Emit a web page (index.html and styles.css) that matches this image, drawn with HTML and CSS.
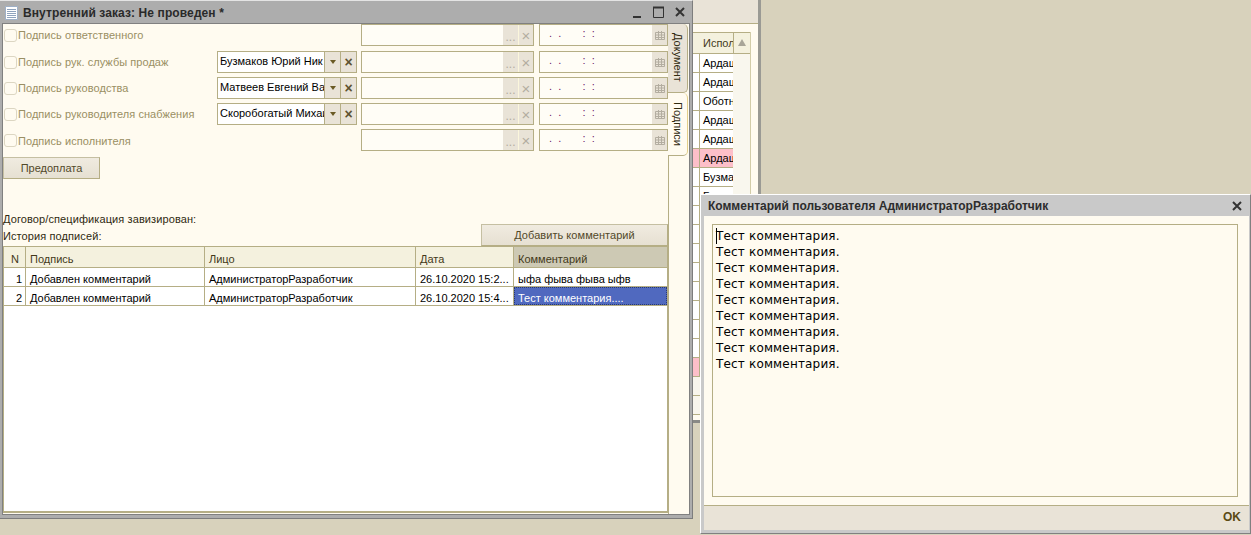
FILE: index.html
```html
<!DOCTYPE html>
<html lang="ru">
<head>
  <meta charset="UTF-8" />
  <title>Внутренний заказ</title>
  <link rel="stylesheet" href="styles.css">
</head>
<body>
  <div class="back-window">
    <div class="back-top"></div>
    <div class="back-content">
      <div class="back-table">
        <div class="back-head"><span class="back-col">Испол</span><span class="back-sort"></span></div>
        <div class="back-row"><span>Ардаш</span></div>
        <div class="back-row"><span>Ардаш</span></div>
        <div class="back-row"><span>Оботн</span></div>
        <div class="back-row"><span>Ардаш</span></div>
        <div class="back-row"><span>Ардаш</span></div>
        <div class="back-row pink"><span>Ардаш</span></div>
        <div class="back-row"><span>Бузма</span></div>
        <div class="back-row"><span>Бузма</span></div>
        <div class="back-row"></div>
        <div class="back-row"></div>
        <div class="back-row"></div>
        <div class="back-row"></div>
        <div class="back-row"></div>
        <div class="back-row"></div>
        <div class="back-row"></div>
        <div class="back-row"></div>
        <div class="back-row pink"></div>
        <div class="back-row pale"></div>
        <div class="back-row pale"></div>
      </div>
    </div>
  </div>

  <div class="window order">
    <div class="title">
      <svg class="doc-icon" width="13" height="14" viewBox="0 0 13 14"><path d="M.5.500h12v13H.5z" fill="#fff" stroke="#9fb0c6"/><path d="M2 3.500h9M2 5.500h9M2 7.500h9M2 9.500h9M2 11.500h9" stroke="#8fa3bd"/></svg>
      <span class="title-text">Внутренний заказ: Не проведен *</span>
      <span class="win-buttons">
        <svg width="10" height="14" viewBox="0 0 10 14"><path d="M0 12h8" stroke="#333" stroke-width="2"/></svg>
        <svg width="13" height="14" viewBox="0 0 13 14"><path d="M1.500 2.500h10v10h-10z" fill="none" stroke="#333"/><path d="M1 2.500h11" stroke="#333" stroke-width="2"/></svg>
        <svg width="12" height="14" viewBox="0 0 12 14"><path d="M2 3l8 8M10 3l-8 8" stroke="#333" stroke-width="2"/></svg>
      </span>
    </div>
    <div class="panel">
      <div class="form">
        <div class="signs">
          <div class="sign-row first">
            <span class="check"></span><span class="sign-label">Подпись ответственного</span>
            <span class="picker-slot"></span>
            <span class="field who"><span class="field-btn dots">...</span><span class="field-btn cross">×</span></span>
            <span class="field when"><span class="mask">.&nbsp;&nbsp;.&nbsp;&nbsp;&nbsp;&nbsp;&nbsp;&nbsp;&nbsp;:&nbsp;&nbsp;:</span><span class="field-btn cal"><svg width="10" height="10" viewBox="0 0 10 10"><path d="M.5 2.500h9v7h-9zM3.500 1v8.500M6.500 1v8.500M.5 5h9M.5 7.500h9" fill="none" stroke="#b3ada0"/></svg></span></span>
          </div>
          <div class="sign-row">
            <span class="check"></span><span class="sign-label">Подпись рук. службы продаж</span>
            <span class="picker"><span class="picker-text">Бузмаков Юрий Ник</span><span class="pick-btn"><i class="arrow"></i></span><span class="pick-btn x">×</span></span>
            <span class="field who"><span class="field-btn dots">...</span><span class="field-btn cross">×</span></span>
            <span class="field when"><span class="mask">.&nbsp;&nbsp;.&nbsp;&nbsp;&nbsp;&nbsp;&nbsp;&nbsp;&nbsp;:&nbsp;&nbsp;:</span><span class="field-btn cal"><svg width="10" height="10" viewBox="0 0 10 10"><path d="M.5 2.500h9v7h-9zM3.500 1v8.500M6.500 1v8.500M.5 5h9M.5 7.500h9" fill="none" stroke="#b3ada0"/></svg></span></span>
          </div>
          <div class="sign-row">
            <span class="check"></span><span class="sign-label">Подпись руководства</span>
            <span class="picker"><span class="picker-text">Матвеев Евгений Ва</span><span class="pick-btn"><i class="arrow"></i></span><span class="pick-btn x">×</span></span>
            <span class="field who"><span class="field-btn dots">...</span><span class="field-btn cross">×</span></span>
            <span class="field when"><span class="mask">.&nbsp;&nbsp;.&nbsp;&nbsp;&nbsp;&nbsp;&nbsp;&nbsp;&nbsp;:&nbsp;&nbsp;:</span><span class="field-btn cal"><svg width="10" height="10" viewBox="0 0 10 10"><path d="M.5 2.500h9v7h-9zM3.500 1v8.500M6.500 1v8.500M.5 5h9M.5 7.500h9" fill="none" stroke="#b3ada0"/></svg></span></span>
          </div>
          <div class="sign-row">
            <span class="check"></span><span class="sign-label">Подпись руководителя снабжения</span>
            <span class="picker"><span class="picker-text">Скоробогатый Михаи</span><span class="pick-btn"><i class="arrow"></i></span><span class="pick-btn x">×</span></span>
            <span class="field who"><span class="field-btn dots">...</span><span class="field-btn cross">×</span></span>
            <span class="field when"><span class="mask">.&nbsp;&nbsp;.&nbsp;&nbsp;&nbsp;&nbsp;&nbsp;&nbsp;&nbsp;:&nbsp;&nbsp;:</span><span class="field-btn cal"><svg width="10" height="10" viewBox="0 0 10 10"><path d="M.5 2.500h9v7h-9zM3.500 1v8.500M6.500 1v8.500M.5 5h9M.5 7.500h9" fill="none" stroke="#b3ada0"/></svg></span></span>
          </div>
          <div class="sign-row last">
            <span class="check"></span><span class="sign-label">Подпись исполнителя</span>
            <span class="picker-slot"></span>
            <span class="field who"><span class="field-btn dots">...</span><span class="field-btn cross">×</span></span>
            <span class="field when"><span class="mask">.&nbsp;&nbsp;.&nbsp;&nbsp;&nbsp;&nbsp;&nbsp;&nbsp;&nbsp;:&nbsp;&nbsp;:</span><span class="field-btn cal"><svg width="10" height="10" viewBox="0 0 10 10"><path d="M.5 2.500h9v7h-9zM3.500 1v8.500M6.500 1v8.500M.5 5h9M.5 7.500h9" fill="none" stroke="#b3ada0"/></svg></span></span>
          </div>
        </div>
        <div class="btn prepay">Предоплата</div>
        <div class="note contract">Договор/спецификация завизирован:</div>
        <div class="history-bar">
          <span class="note">История подписей:</span>
          <span class="btn add">Добавить комментарий</span>
        </div>
        <div class="grid">
          <div class="grid-row head">
            <span class="c-n center">N</span><span class="c-sign">Подпись</span><span class="c-face">Лицо</span><span class="c-date">Дата</span><span class="c-com current">Комментарий</span>
          </div>
          <div class="grid-row">
            <span class="c-n num">1</span><span class="c-sign">Добавлен комментарий</span><span class="c-face">АдминистраторРазработчик</span><span class="c-date">26.10.2020 15:2...</span><span class="c-com">ыфа фыва фыва ыфв</span>
          </div>
          <div class="grid-row">
            <span class="c-n num">2</span><span class="c-sign">Добавлен комментарий</span><span class="c-face">АдминистраторРазработчик</span><span class="c-date">26.10.2020 15:4...</span><span class="c-com selected">Тест комментария....</span>
          </div>
        </div>
      </div>
      <div class="tabs">
        <div class="tab inactive"><span>Документ</span></div>
        <div class="tab active"><span>Подписи</span></div>
        <div class="tab-rest"></div>
      </div>
    </div>
  </div>

  <div class="window comment">
    <div class="comment-title">
      <span>Комментарий пользователя АдминистраторРазработчик</span>
      <svg width="12" height="12" viewBox="0 0 12 12"><path d="M2 2l8 8M10 2l-8 8" stroke="#333" stroke-width="2"/></svg>
    </div>
    <div class="comment-body">
      <div class="memo">
        <div><i class="caret"></i>Тест комментария.</div>
        <div>Тест комментария.</div>
        <div>Тест комментария.</div>
        <div>Тест комментария.</div>
        <div>Тест комментария.</div>
        <div>Тест комментария.</div>
        <div>Тест комментария.</div>
        <div>Тест комментария.</div>
        <div>Тест комментария.</div>
      </div>
    </div>
    <div class="comment-foot">OK</div>
  </div>
</body>
</html>
```

FILE: styles.css
```css
* { margin: 0; padding: 0; box-sizing: border-box; }
html, body { height: 100%; }
body {
  position: relative;
  overflow: hidden;
  background: #d8d2bc;
  font-family: "Liberation Sans", Arial, sans-serif;
  font-size: 11px;
  color: #2b2b1f;
}

/* window behind the order */
.back-window {
  position: absolute;
  left: 680px;
  top: 0;
  width: 81px;
  height: 423px;
  border-right: 3px solid #9a9a94;
  border-bottom: 3px solid #8a8a86;
  background: #fffbf0;
  overflow: hidden;
}
.back-top { height: 24px; background: #e9e3d7; border-bottom: 1px solid #b5ae85; }
.back-content { padding-top: 8px; }
.back-table { width: 71px; border-right: 1px solid #d2cca8; background: #f9f7ee; }
.back-head {
  display: flex;
  height: 22px;
  margin-left: 12px;
  background: #f4f1de;
  border-top: 1px solid #b5ae85;
  border-bottom: 1px solid #b5ae85;
  line-height: 20px;
}
.back-col { width: 41px; padding-left: 11px; overflow: hidden; white-space: nowrap; color: #43391a; }
.back-sort { flex: 1; border-left: 1px solid #b5ae85; position: relative; }
.back-sort::after {
  content: "";
  position: absolute;
  left: 4px;
  top: 6px;
  border: 4px solid transparent;
  border-top: 0;
  border-bottom: 7px solid #a8a598;
}
.back-row {
  height: 19px;
  width: 41px;
  margin-left: 12px;
  padding-left: 11px;
  line-height: 18px;
  background: linear-gradient(#b5ae85, #b5ae85) 7px 0 / 1px 100% no-repeat, #fff;
  color: #000;
  overflow: hidden;
  white-space: nowrap;
  border-bottom: 1px solid #b5ae85;
}
.back-row.pink { background: linear-gradient(#b5ae85, #b5ae85) 7px 0 / 1px 100% no-repeat, #fdbfc9; }
.back-row.pale { background: #f8f5ec; }

.window { position: absolute; }

/* order window */
.order {
  left: 0;
  top: 0;
  width: 693px;
  height: 519px;
  background: #adadad;
  border-top: 1px solid #e4e4e4;
  border-right: 1px solid #7d7d7d;
  border-bottom: 1px solid #7d7d7d;
  display: flex;
  flex-direction: column;
}
.title {
  height: 22px;
  flex: none;
  display: flex;
  align-items: center;
  padding: 2px 6px 0 5px;
  color: #2a2a2a;
  font-weight: bold;
  font-size: 12px;
}
.doc-icon { margin-right: 5px; }
.title-text { flex: 1; letter-spacing: 0.1px; }
.win-buttons { display: flex; gap: 9px; margin-top: -2px; }
.panel {
  flex: 1;
  display: flex;
  margin: 0 2px 3px 2px;
  background: #fffbf0;
  border: 1px solid #808080;
  min-height: 0;
}
.form { width: 665px; padding-bottom: 1px; display: flex; flex-direction: column; }

.sign-row {
  display: flex;
  align-items: center;
  height: 22px;
  margin-bottom: 4px;
}
.sign-row.first { height: 22px; margin-bottom: 5px; }
.sign-row.last { margin-top: 1px; margin-bottom: 0; }
.sign-row.last .sign-label { padding-top: 2px; }
.check {
  width: 13px;
  height: 13px;
  margin-left: 1px;
  margin-right: 1px;
  border: 1px solid #dcd6c2;
  border-radius: 3px;
  flex: none;
}
.sign-label { width: 199px; color: #9a8f63; white-space: nowrap; letter-spacing: 0.05px; }
.picker, .picker-slot { width: 140px; height: 22px; margin-right: 4px; flex: none; }
.picker {
  display: flex;
  border: 1px solid #b5ae85;
  background: #fff;
  color: #000;
}
.picker-text { flex: 1; min-width: 0; padding-left: 2px; line-height: 19px; overflow: hidden; white-space: nowrap; }
.pick-btn {
  width: 16px;
  flex: none;
  background: #e9e3d7;
  border-left: 1px solid #b5ae85;
  display: flex;
  align-items: center;
  justify-content: center;
  color: #5d5230;
  font-size: 14px;
  font-weight: bold;
}
.arrow { border: 3.500px solid transparent; border-top: 4px solid #6a5a24; border-bottom: 0; }
.field {
  display: flex;
  justify-content: flex-end;
  height: 22px;
  border: 1px solid #b5ae85;
  background: #fffdf6;
  flex: none;
}
.field.who { width: 173px; margin-right: 5px; }
.field.when { width: 129px; justify-content: space-between; }
.mask { padding-left: 9px; line-height: 17px; color: #6b1a6b; white-space: pre; }
.field-btn {
  width: 15px;
  background: #e9e3d7;
  color: #b3ada0;
  display: flex;
  align-items: center;
  justify-content: center;
}
.field-btn.cross { font-size: 15px; border-left: 1px solid #fbf6dc; }
.field-btn.dots { align-items: flex-end; line-height: 16px; font-size: 12px; }

.btn {
  background: linear-gradient(#f0ebe0, #e6e0d2);
  border: 1px solid #c5bfa2;
  border-right-color: #b5ae85;
  border-bottom-color: #b5ae85;
  text-align: center;
  color: #52492a;
}
.prepay { width: 97px; height: 22px; margin-top: 6px; line-height: 21px; }
.note { color: #2f2a10; letter-spacing: 0.1px; }
.contract { margin-top: 34px; line-height: 13px; }
.history-bar {
  display: flex;
  justify-content: space-between;
  align-items: flex-start;
  height: 22px;
  flex: none;
  margin-top: -2px;
}
.history-bar .note { padding-top: 6px; line-height: 13px; }
.add { width: 187px; height: 22px; line-height: 21px; letter-spacing: 0.05px; }

/* signature history */
.grid {
  flex: 1;
  width: 665px;
  background: #fff;
  border-top: 1px solid #b5ae85;
  border-left: 1px solid #b5ae85;
  border-right: 1px solid #b5ae85;
  border-bottom: 2px solid #b5ae85;
  color: #000;
}
.grid-row { display: flex; height: 19px; border-bottom: 1px solid #b5ae85; line-height: 18px; }
.grid-row.head { height: 21px; background: #f4f1de; line-height: 20px; color: #43391a; }
.grid-row span { border-right: 1px solid #b5ae85; padding: 2px 3px 0 4px; white-space: nowrap; overflow: hidden; flex: none; }
.c-n { width: 22px; }
.c-n.center { text-align: center; }
.c-n.num { text-align: right; }
.c-sign { width: 179px; }
.c-face { width: 211px; }
.c-date { width: 98px; }
.grid-row .c-com { width: 153px; border-right: 0; }
.grid-row .current { background: #cdc9b4; }
.grid-row .selected { background: #5069bf; color: #fff; outline: 1px dotted #2a3a70; outline-offset: -1px; }

/* vertical tabs */
.tabs { width: 21px; display: flex; flex-direction: column; }
.tab {
  writing-mode: vertical-rl;
  display: flex;
  align-items: center;
  color: #2f2a10;
  border-right: 1px solid #b5ae85;
  border-radius: 0 5px 5px 0;
  width: 20px;
  flex: none;
}
.tab.inactive { height: 69px; background: #e9e3d7; padding-top: 9px; border-bottom: 1px solid #b5ae85; }
.tab.active { height: 63px; padding-top: 9px; border-right: 1px solid #e3cf8a; border-bottom: 1px solid #b5ae85; }
.tab-rest { flex: 1; border-left: 1px solid #b5ae85; }

/* comment dialog */
.comment {
  left: 700px;
  top: 194px;
  width: 551px;
  height: 340px;
  background: #c9c9c9;
  border-top: 1px solid #fff;
  border-left: 1px solid #fff;
  border-bottom: 1px solid #808080;
  border-right: 1px solid #808080;
  padding: 0 1px 3px 3px;
  display: flex;
  flex-direction: column;
}
.comment-title {
  height: 21px;
  flex: none;
  display: flex;
  align-items: center;
  justify-content: space-between;
  padding: 0 6px 0 4px;
  font-size: 12px;
  font-weight: bold;
  color: #2d2d2d;
}
.comment-body { flex: 1; background: #fffbf0; padding: 8px 11px 8px 8px; min-height: 0; }
.memo {
  height: 100%;
  border: 1px solid #b5ae85;
  padding: 3px 3px;
  font-family: "DejaVu Sans", sans-serif;
  font-size: 12px;
  letter-spacing: 0.17px;
  line-height: 16px;
  color: #000;
}
.caret { display: inline-block; width: 0; height: 16px; margin-right: -1px; border-left: 1px solid #000; vertical-align: top; }
.comment-foot {
  height: 25px;
  flex: none;
  background: #e9e3d7;
  border-top: 1px solid #b5ae85;
  text-align: right;
  padding-right: 8px;
  line-height: 23px;
  font-weight: bold;
  font-size: 12px;
  color: #5b4a14;
}
```
